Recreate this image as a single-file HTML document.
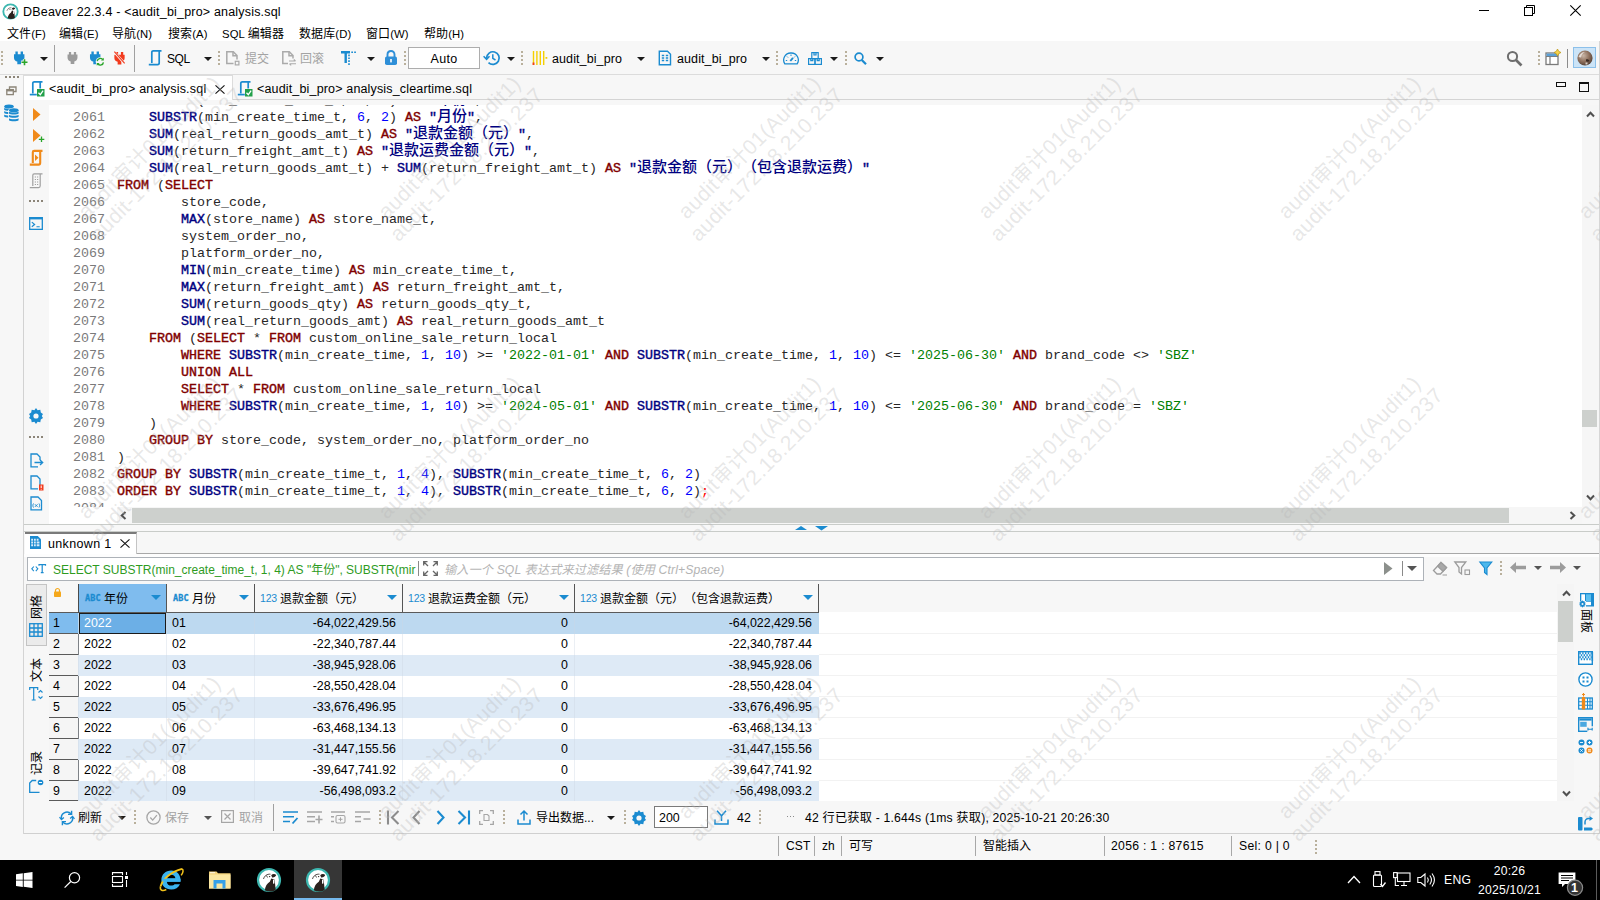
<!DOCTYPE html>
<html lang="zh"><head><meta charset="utf-8"><title>DBeaver</title>
<style>
*{box-sizing:border-box;margin:0;padding:0}
html,body{width:1600px;height:900px;overflow:hidden;background:#fff}
body{position:relative;text-spacing-trim:space-all;font-family:"Liberation Sans","Noto Sans CJK SC",sans-serif;font-size:12px;color:#000}
.abs{position:absolute}
.t{position:absolute;white-space:nowrap;line-height:16px;height:16px}
svg{position:absolute;overflow:visible}
/* title */
#title{position:absolute;left:0;top:0;width:1600px;height:22px;background:#fff}
#menu{position:absolute;left:0;top:22px;width:1600px;height:19px;background:#fff}
#menu .t{top:3.5px;font-size:12px;letter-spacing:.1px}
#toolbar{position:absolute;left:0;top:41px;width:1600px;height:33px;background:#f7f7f7}
.grip{position:absolute;width:2px;height:16px;background:repeating-linear-gradient(#b9b09c 0 2px,transparent 2px 4px)}
.vsep{position:absolute;width:1px;background:#a0a0a0}
.dd{position:absolute;width:0;height:0;border-left:4px solid transparent;border-right:4px solid transparent;border-top:4px solid #1a1a1a}
#tabs{position:absolute;left:0;top:74px;width:1600px;height:27px;background:#f7f7f7;border-top:1px solid #dcdcdc}
#leftbar{position:absolute;left:0;top:101px;width:23px;height:758px;background:#f7f7f7}
/* editor */
#edwrap{position:absolute;left:24px;top:100px;width:1575px;height:425px;background:#f7f7f7;overflow:hidden}
#ruler{position:absolute;left:0;top:0;width:25px;height:425px;background:#f7f7f7}
#codeview{position:absolute;left:25px;top:5px;width:1533px;height:402px;background:#fff;overflow:hidden}
#code{position:absolute;left:0;top:-13px;font-family:"Liberation Mono","Noto Sans CJK SC",monospace;font-size:13.333px;line-height:17px;color:#262626;text-spacing-trim:space-all}
.ln{height:17px;white-space:pre;overflow:visible}
.no{display:inline-block;width:56px;text-align:right;color:#7a7a7a;margin-right:12px}
.k{color:#800000;font-weight:normal;-webkit-text-stroke:.4px #800000}
.f{color:#000080;font-weight:normal;-webkit-text-stroke:.4px #000080}
.q{color:#000080;font-weight:normal;-webkit-text-stroke:.4px #000080}
.cj{font-family:"Noto Sans CJK SC",sans-serif;font-size:15px;font-weight:500;line-height:0;-webkit-text-stroke:0}
.s{color:#008000}
.n{color:#0000ff}
.e{color:#ff0000}
/* watermark */
#wmlayer{position:absolute;left:0;top:0;width:1600px;height:860px;overflow:hidden;pointer-events:none}
.wm{position:absolute;width:300px;height:48px;transform:rotate(-45deg);transform-origin:50% 50%;color:rgba(182,182,182,.33);font-size:21px;letter-spacing:.4px;line-height:24px;text-align:center;white-space:nowrap;font-family:"Liberation Sans","Noto Sans CJK SC",sans-serif}
/* taskbar */
#taskbar{position:absolute;left:0;top:860px;width:1600px;height:40px;background:#000}
/* results */
#sash{position:absolute;left:24px;top:524px;width:1576px;height:8px;background:#f8f8f8;border-top:1px solid #c9ccc9;border-bottom:1px solid #c9ccc9}
#results{position:absolute;left:0;top:532px;width:1600px;height:302px;background:#f7f7f7;overflow:hidden}
#results .hl{position:absolute;height:1px;background:#c4c4c4}
.gh{position:absolute;top:52px;height:28px;background:#f7f7f7}
.gh .ht{position:absolute;top:7px;font-size:12px;line-height:16px;white-space:nowrap}
.gh .ic{position:absolute;top:8px;font-size:10.500px;line-height:12px;color:#1b8bd0;letter-spacing:-.2px}
.gh .abc{position:absolute;top:10px;font-size:8.500px;line-height:9px;color:#1b8bd0;font-weight:bold;letter-spacing:.1px;font-family:"DejaVu Sans Mono","Liberation Mono",monospace;-webkit-text-stroke:.3px #1b8bd0}
.gh .tri{position:absolute;top:11px;width:0;height:0;border-left:5px solid transparent;border-right:5px solid transparent;border-top:5px solid #1b8bd0}
.csep{position:absolute;top:52px;width:1px;height:28px;background:#555}
.row{position:absolute;left:78px;width:741px;height:21px}
.row.od{background:#deeaf6}
.row.sel{background:#bdd9f0}
.c{position:absolute;top:0;height:21px;line-height:20px;font-size:12.4px;white-space:nowrap;padding:0 6px;border-left:1px solid rgba(205,216,228,.4)}
.c.r{text-align:right}
.c.l{padding-left:5px}
.rh{position:absolute;left:49px;width:29px;height:21px;border-top:1px solid #5a5a5a;font-size:12.4px;line-height:20px;padding-left:4px;background:#f5f5f5}
.vt{position:absolute;font-size:12px;line-height:14px;white-space:nowrap;transform-origin:0 0;transform:rotate(-90deg)}
#status{position:absolute;left:0;top:834px;width:1600px;height:26px;background:#f7f7f7}
.la{font-size:11.300px}

</style></head>
<body>
<div id="title">
  <svg style="left:1.500px;top:2.500px" width="17" height="17" viewBox="0 0 26 26"><circle cx="13" cy="13" r="11" fill="#fff" stroke="#3db7b0" stroke-width="2.800"/><path d="M8.800 23.300c.4-4.300 2.400-6.800 5-8.600l1.500-3.200 3.200 1 .6 4.500.6 6c-3.500 2-7.600 2-10.900.3z" fill="#2a211d"/><path d="M15.200 8.200c1.400-1.500 3.800-1.600 5-.1-.5 1.500-2.400 2.600-4 2.300z" fill="#2a211d"/><path d="M17 12.800v4l1.400-.4v-4z" fill="#fff"/><path d="M7.500 12c.8-3 3.500-5.200 7-4.800M10.500 8.500l1 2" stroke="#2a211d" fill="none" stroke-width=".8"/><circle cx="13.600" cy="9.600" r=".7" fill="#2a211d"/></svg>
  <div class="t" style="left:23px;top:4px;font-size:12.5px;letter-spacing:.19px">DBeaver 22.3.4 - &lt;audit_bi_pro&gt; analysis.sql</div>
  <div class="abs" style="left:1479px;top:10px;width:10px;height:1px;background:#000"></div>
  <svg style="left:1524px;top:5px" width="11" height="11" viewBox="0 0 11 11" fill="none" stroke="#000" stroke-width="1"><rect x=".5" y="2.500" width="8" height="8"/><path d="M2.500 2.500v-2h8v8h-2"/></svg>
  <svg style="left:1570px;top:5px" width="11" height="11" viewBox="0 0 11 11" stroke="#000" stroke-width="1.100"><path d="M.3.300l10.400 10.400M10.700.300L.3 10.700"/></svg>
</div>
<div id="menu">
  <div class="t" style="left:7px">文件<span class="la">(F)</span></div>
  <div class="t" style="left:59px">编辑<span class="la">(E)</span></div>
  <div class="t" style="left:112px">导航<span class="la">(N)</span></div>
  <div class="t" style="left:168px">搜索<span class="la">(A)</span></div>
  <div class="t" style="left:222px"><span class="la">SQL </span>编辑器</div>
  <div class="t" style="left:299px">数据库<span class="la">(D)</span></div>
  <div class="t" style="left:366px">窗口<span class="la">(W)</span></div>
  <div class="t" style="left:424px">帮助<span class="la">(H)</span></div>
</div>
<div id="toolbar">
<div class="grip" style="left:1px;top:10px"></div>
<svg style="left:13px;top:9px" width="16" height="16" viewBox="0 0 16 16"><path d="M2 1h2.500v3h3V1H10v3h1.500v3.500c0 2.200-1.500 3.700-3.500 4v3H4v-3C2 11.200.5 9.700.5 7.500V4H2z" fill="#1b8bd0" transform="translate(.5 .5) scale(.95)"/><path d="M11.500 9v6.500M8.200 12.200h6.600" stroke="#f7f7f7" stroke-width="3.200" fill="none"/><path d="M11.500 9.200v6M8.500 12.200h6" stroke="#2aa52a" stroke-width="1.600" fill="none"/></svg>
<div class="dd" style="left:40px;top:16px"></div>
<div class="vsep" style="left:54px;top:4px;height:27px"></div>
<svg style="left:67px;top:10px" width="11" height="14" viewBox="0 0 12 15.5"><path d="M2 1h2.500v3h3V1H10v3h1.500v3.500c0 2.200-1.500 3.700-3.500 4v3H4v-3C2 11.200.5 9.700.5 7.500V4H2z" fill="#9b9b9b"/></svg>
<svg style="left:89px;top:9px" width="16" height="16" viewBox="0 0 16 16"><path d="M2 1h2.500v3h3V1H10v3h1.500v3.500c0 2.200-1.500 3.700-3.500 4v3H4v-3C2 11.200.5 9.700.5 7.500V4H2z" fill="#1b8bd0" transform="translate(.5 .5) scale(.95)"/><circle cx="11.300" cy="11.800" r="4.600" fill="#f7f7f7"/><path d="M8.200 11.200a3.200 3.200 0 0 1 5.500-1.800M14.400 12.300a3.200 3.200 0 0 1-5.500 1.800" stroke="#2aa52a" stroke-width="1.400" fill="none"/><path d="M14.800 7.700v2.800h-2.800zM7.800 15.800v-2.800h2.800z" fill="#2aa52a"/></svg>
<svg style="left:113px;top:10px" width="13" height="14" viewBox="0 0 13 15"><path d="M2 1h2.500v3h3V1H10v3h1.500v3.500c0 2.200-1.500 3.700-3.500 4v3H4v-3C2 11.200.5 9.700.5 7.500V4H2z" fill="#f23a1d" transform="translate(.5 0)"/><path d="M.8.800l11 12.500" stroke="#f7f7f7" stroke-width="2.600"/><path d="M1 .6l11 12.600" stroke="#f23a1d" stroke-width="1.200"/></svg>
<div class="vsep" style="left:134px;top:4px;height:27px"></div>
<svg style="left:148px;top:9px" width="15" height="16" viewBox="0 0 15 16" fill="none" stroke="#1b8bd0" stroke-width="1.700"><path d="M3.800 13V2.200c0-.9.700-1.300 1.400-1.300h8.300M11.200 1.500v11.300c0 1-.6 1.800-1.600 1.800H.8"/></svg>
<div class="t" style="left:167px;top:10px;font-size:12px;letter-spacing:-.4px">SQL</div>
<div class="dd" style="left:204px;top:16px"></div>
<div class="grip" style="left:218px;top:10px"></div>
<svg style="left:225px;top:9px" width="16" height="16" viewBox="0 0 16 16" fill="none" stroke="#aaa" stroke-width="1.500"><path d="M8.500 13.500H1.800V1.800h6.500l3.700 3.700v4"/><path d="M8 1.800v4h4"/><rect x="10.300" y="11.300" width="3.600" height="3.600" stroke-width="1.200"/></svg>
<div class="t" style="left:245px;top:10px;color:#a3a3a3">提交</div>
<svg style="left:281px;top:9px" width="16" height="16" viewBox="0 0 16 16" fill="none" stroke="#aaa" stroke-width="1.500"><path d="M7 13.500H1.800V1.800h6.500l3.700 3.700v3"/><path d="M8 1.800v4h4"/><path d="M8 11h6.500M12.800 9.500L14.500 11M8.500 13.800H15M10.200 15.300L8.500 13.800" stroke-width="1.100"/></svg>
<div class="t" style="left:300px;top:10px;color:#a3a3a3">回滚</div>
<svg style="left:341px;top:9px" width="16" height="16" viewBox="0 0 16 16"><path d="M0 1h9v2.400H5.900V13H3.500V3.400H0z" fill="#1b8bd0"/><path d="M10.300 2.200h5.200" stroke="#1b8bd0" stroke-width="1.600" stroke-dasharray="1.700 1.200"/><path d="M8 4.500v10.500" stroke="#1b8bd0" stroke-width="1.600" stroke-dasharray="1.700 1.200"/></svg>
<div class="dd" style="left:367px;top:16px"></div>
<svg style="left:384px;top:9px" width="14" height="16" viewBox="0 0 14 16"><path d="M3.500 7V4.600C3.500 2.500 5 1 7 1s3.500 1.500 3.500 3.600V7" fill="none" stroke="#2e8fd8" stroke-width="1.900"/><rect x="1" y="6.500" width="12" height="8.500" rx="1.800" fill="#2e8fd8"/><rect x="6.200" y="9" width="1.600" height="3.400" fill="#fff"/></svg>
<div class="grip" style="left:404px;top:10px"></div>
<div class="abs" style="left:408px;top:6px;width:72px;height:22px;background:#fff;border:1px solid #adadad"></div>
<div class="t" style="left:408px;top:10px;width:72px;text-align:center;font-size:12.500px;letter-spacing:.3px">Auto</div>
<svg style="left:483px;top:9px" width="17" height="16" viewBox="0 0 17 16" fill="none" stroke="#1b8bd0" stroke-width="1.700"><path d="M3.600 8a6.300 6.300 0 1 1 1.900 4.600"/><path d="M.6 6.200L3.600 9.300 6.500 6.200" stroke-width="1.500"/><path d="M9.800 4.300v4l2.700 1.700" stroke-width="1.500"/></svg>
<div class="dd" style="left:507px;top:16px"></div>
<div class="grip" style="left:521px;top:10px"></div>
<svg style="left:532px;top:9px" width="16" height="16" viewBox="0 0 16 16"><path d="M1.500 1v14M4.900 1v14M8.300 1v14M11.700 1v14" stroke="#f5d000" stroke-width="1.400"/><rect x=".6" y="12.500" width="1.800" height="2.500" fill="#f23a1d"/><rect x="13.500" y="7" width="1.800" height="1.800" fill="#f5d000"/></svg>
<div class="t" style="left:552px;top:10px;font-size:12.500px;letter-spacing:.1px">audit_bi_pro</div>
<div class="dd" style="left:637px;top:16px"></div>
<svg style="left:658px;top:9px" width="14" height="16" viewBox="0 0 14 16" fill="none" stroke="#1b8bd0"><path d="M1.300 1.200h8.200l3 3v10.600H1.300z" stroke-width="1.400"/><path d="M3.800 5.500h2.400M3.800 8h2.400M3.800 10.500h2.400M7.800 5.500h2.400M7.800 8h2.400M7.800 10.500h2.400" stroke-width="1.400"/></svg>
<div class="t" style="left:677px;top:10px;font-size:12.500px;letter-spacing:.1px">audit_bi_pro</div>
<div class="dd" style="left:762px;top:16px"></div>
<div class="grip" style="left:776px;top:10px"></div>
<svg style="left:783px;top:11px" width="16" height="13" viewBox="0 0 16 13" fill="none" stroke="#1b8bd0" stroke-width="1.300"><path d="M1.800 11.800A7 7 0 0 1 8 1a7 7 0 0 1 6.200 10.800z"/><path d="M7.300 9l2.700-3.200" stroke-width="1.900"/><path d="M2.800 8.500h1.400M11.800 8.500h1.400M8 2.500v1.500M4 4.500l1 1M12 4.500l-1 1" stroke-width="1"/></svg>
<svg style="left:808px;top:11px" width="14" height="13" viewBox="0 0 14 13" fill="none" stroke="#1b8bd0" stroke-width="1.200"><rect x="3.800" y=".6" width="6.400" height="6"/><path d="M6 .6v2.400h2V.6"/><rect x=".6" y="6.600" width="6.400" height="5.800"/><rect x="7" y="6.600" width="6.400" height="5.800"/><path d="M2.800 6.600v2h2v-2M9.200 6.600v2h2v-2"/></svg>
<div class="dd" style="left:830px;top:16px"></div>
<div class="grip" style="left:845px;top:10px"></div>
<svg style="left:854px;top:11px" width="13" height="13" viewBox="0 0 13 13" fill="none" stroke="#1b8bd0"><circle cx="5" cy="5" r="3.900" stroke-width="1.700"/><path d="M7.800 8l4.200 4.200" stroke-width="2.200"/></svg>
<div class="dd" style="left:876px;top:16px"></div>
<svg style="left:1506px;top:9px" width="17" height="17" viewBox="0 0 17 17" fill="none" stroke="#6e6e6e"><circle cx="6.500" cy="6.500" r="4.600" stroke-width="2"/><path d="M10 10l5.500 5.500" stroke-width="2.600"/></svg>
<div class="grip" style="left:1538px;top:10px"></div>
<svg style="left:1545px;top:8px" width="16" height="17" viewBox="0 0 16 17" fill="none"><rect x="1" y="4" width="12" height="11.500" stroke="#7a7a7a" stroke-width="1.300" fill="#fff"/><path d="M1 7.500h12M5 7.500v8" stroke="#7a7a7a" stroke-width="1.200"/><rect x="1.600" y="4.600" width="10.800" height="2.500" fill="#5aa0d8"/><path d="M12.500 0l1.200 2.300 2.300 1.200-2.300 1.200-1.200 2.300-1.200-2.300L9 3.500l2.300-1.200z" fill="#f7d24a" stroke="#b89412" stroke-width=".7"/></svg>
<div class="vsep" style="left:1567px;top:8px;height:19px;background:#8c8c8c"></div>
<div class="abs" style="left:1573px;top:6px;width:23px;height:21px;background:#cce4f7;border:1px solid #8cc0ea"></div>
<svg style="left:1577px;top:9px" width="16" height="16" viewBox="0 0 16 16"><defs><radialGradient id="bv" cx=".4" cy=".35" r=".7"><stop offset="0" stop-color="#c9b5a5"/><stop offset=".55" stop-color="#8d6f5c"/><stop offset="1" stop-color="#4f3d33"/></radialGradient></defs><circle cx="8" cy="8" r="7.600" fill="url(#bv)"/><path d="M1.500 7c1-3 3.500-5 6.500-5-2 1-3.500 2.500-4 5.500z" fill="#efe9e4" opacity=".85"/><path d="M9 9.500c1.500-.5 3 0 3.500 1.500-1 1-2.500 1-3.500.3z" fill="#3a2c25"/><path d="M8.500 12.500h2v2h-2z" fill="#f3efe9" opacity=".8"/></svg>

</div>
<div id="tabs">
<div class="abs" style="left:5px;top:1px;width:14px;height:2px;background:repeating-linear-gradient(90deg,#8c8578 0 2px,transparent 2px 4px)"></div>
<svg style="left:6px;top:11px" width="11" height="10" viewBox="0 0 11 10" fill="none" stroke="#8c8578" stroke-width="1.300"><path d="M3.500 3V1h6.500v4.500H8"/><rect x=".8" y="3.600" width="6.500" height="5"/><path d="M.8 4.600h6.500" stroke-width="1.600"/></svg>
<div class="abs" style="left:23px;top:0;width:210px;height:27px;background:#fff;border:1px solid #dcdcdc;border-bottom:none"></div>
<svg style="left:29px;top:6px" width="16" height="16" viewBox="0 0 16 16" fill="none"><path d="M3.800 12.500V2.200c0-.9.700-1.300 1.400-1.300h8.300M11.200 1.500v6" stroke="#1b8bd0" stroke-width="1.700"/><path d="M.8 13.600h7" stroke="#1b8bd0" stroke-width="1.700"/><rect x="8" y="8" width="7.500" height="7.500" fill="#22a04a"/><path d="M9.500 11.800l1.800 1.900 2.800-4" stroke="#fff" stroke-width="1.300"/></svg>
<div class="t" style="left:49px;top:6px;font-size:12.500px;letter-spacing:.22px">&lt;audit_bi_pro&gt; analysis.sql</div>
<svg style="left:215px;top:10px" width="10" height="9" viewBox="0 0 10 9" stroke="#111" stroke-width="1.100"><path d="M.5.300l9 8.400M9.500.300l-9 8.400"/></svg>
<svg style="left:237px;top:6px" width="16" height="16" viewBox="0 0 16 16" fill="none"><path d="M3.800 12.500V2.200c0-.9.700-1.300 1.400-1.300h8.300M11.200 1.500v6" stroke="#1b8bd0" stroke-width="1.700"/><path d="M.8 13.600h7" stroke="#1b8bd0" stroke-width="1.700"/><rect x="8" y="8" width="7.500" height="7.500" fill="#22a04a"/><path d="M9.500 11.800l1.800 1.900 2.800-4" stroke="#fff" stroke-width="1.300"/></svg>
<div class="t" style="left:257px;top:6px;font-size:12.500px;letter-spacing:.16px">&lt;audit_bi_pro&gt; analysis_cleartime.sql</div>
<div class="abs" style="left:1556px;top:7px;width:10px;height:5px;border:1px solid #111;border-top-width:1.500px"></div>
<div class="abs" style="left:1579px;top:7px;width:10px;height:10px;border:1px solid #111;border-top-width:2px"></div>
<div class="abs tabline" style="left:233px;top:24px;width:1367px;height:1px;background:#d4d4d4"></div>

</div>
<div id="leftbar">
<svg style="left:3px;top:3px" width="16" height="17" viewBox="0 0 16 17"><ellipse cx="6" cy="2.5" rx="4.800" ry="2" fill="#1b8bd0"/><path d="M1.2000000000000002 3.7c1 1.300 8.600 1.300 9.600 0v2c-1 1.300-8.600 1.300-9.600 0z" fill="#1b8bd0"/><path d="M1.2000000000000002 7.1c1 1.300 8.600 1.300 9.600 0v2c-1 1.300-8.600 1.300-9.600 0z" fill="#1b8bd0"/><path d="M1.2000000000000002 10.5c1 1.300 8.600 1.300 9.600 0v2c-1 1.300-8.600 1.300-9.600 0z" fill="#1b8bd0"/><ellipse cx="10.800" cy="6.500" rx="5.600" ry="2.800" fill="#f7f7f7"/><rect x="5.200" y="6.500" width="11" height="10" fill="#f7f7f7"/><ellipse cx="10.8" cy="6.2" rx="4.800" ry="2" fill="#1b8bd0"/><path d="M6.000000000000001 7.4c1 1.300 8.600 1.300 9.600 0v2c-1 1.300-8.600 1.300-9.600 0z" fill="#1b8bd0"/><path d="M6.000000000000001 10.8c1 1.300 8.600 1.300 9.600 0v2c-1 1.300-8.600 1.300-9.600 0z" fill="#1b8bd0"/><path d="M6.000000000000001 14.2c1 1.300 8.600 1.300 9.600 0v2c-1 1.300-8.600 1.300-9.600 0z" fill="#1b8bd0"/></svg>

</div>

<div id="edwrap">
  <div id="ruler">
<svg style="left:9px;top:8px" width="8" height="13" viewBox="0 0 8 13"><path d="M0 0l7.500 6.500L0 13z" fill="#f08a1a"/></svg>
<svg style="left:9px;top:29px" width="12" height="15" viewBox="0 0 12 15"><path d="M0 0l7.500 6.500L0 13z" fill="#f08a1a"/><path d="M8.500 7.500v5.500M5.800 10.300h5.500" stroke="#2aa52a" stroke-width="1.300"/></svg>
<svg style="left:5px;top:50px" width="15" height="17" viewBox="0 0 15 17" fill="none" stroke="#f08a1a" stroke-width="2.100"><path d="M3.800 13V2.200c0-.9.700-1.300 1.400-1.300h8.300M11.200 1.500v11.300c0 1-.6 1.800-1.600 1.800H.8"/><path d="M6 4.500l3.500 3.200L6 11z" fill="#f08a1a" stroke="none"/></svg>
<svg style="left:5px;top:73px" width="15" height="17" viewBox="0 0 15 17" fill="none" stroke="#a0a0a0" stroke-width="1.200"><path d="M3.800 13V2.200c0-.9.700-1.300 1.400-1.300h8.300M11.200 1.500v11.300c0 1-.6 1.800-1.600 1.800H.8"/><path d="M5.800 4h3.600M5.800 6.500h3.600M5.800 9h3.600M5.800 11.500h3.600" stroke-dasharray="1.200 1"/></svg>
<div class="abs" style="left:5px;top:100px;width:14px;height:2px;background:repeating-linear-gradient(90deg,#8c8578 0 2px,transparent 2px 4px)"></div>
<svg style="left:5px;top:117px" width="14" height="13" viewBox="0 0 15 14" fill="none" stroke="#1b8bd0"><rect x=".7" y=".7" width="13.600" height="12.600" stroke-width="1.400"/><path d="M.7 1.500h13.600" stroke-width="2.200"/><path d="M3 5.500l3 2.500-3 2.500M8 10.500h3.500" stroke-width="1.300"/></svg>
<svg style="left:4px;top:308px" width="16" height="16" viewBox="0 0 16 16"><path d="M8 0l1.600 2.200 2.700-.5.500 2.700L15 6l-1.200 2L15 10l-2.200 1.600-.5 2.700-2.700-.5L8 16l-1.600-2.200-2.700.5-.5-2.700L1 10l1.200-2L1 6l2.200-1.600.5-2.700 2.700.5z" fill="#1b8bd0"/><circle cx="8" cy="8" r="2.600" fill="#f7f7f7"/></svg>
<div class="abs" style="left:5px;top:336px;width:14px;height:2px;background:repeating-linear-gradient(90deg,#8c8578 0 2px,transparent 2px 4px)"></div>
<svg style="left:6px;top:353px" width="14" height="15" viewBox="0 0 14 15" fill="none" stroke="#1b8bd0" stroke-width="1.300"><path d="M8 13.800H1V1h6l3 3v3"/><path d="M4.500 9.500h8M10 7l2.700 2.500L10 12"/></svg>
<svg style="left:6px;top:375px" width="14" height="16" viewBox="0 0 14 16" fill="none"><path d="M8 13.800H1V1h6l3 3v6" stroke="#1b8bd0" stroke-width="1.300"/><rect x="9" y="9.500" width="4.500" height="6" fill="#f23a1d"/><path d="M11.200 10.500v2.500M11.200 13.800v.8" stroke="#fff" stroke-width="1"/></svg>
<svg style="left:6px;top:396px" width="13" height="15" viewBox="0 0 13 15" fill="none" stroke="#1b8bd0" stroke-width="1.300"><path d="M1 13.800V1h7l3.500 3.500v9.300z"/><path d="M3.500 7.500c-.8 1.200-.8 2.800 0 4M9 7.500c.8 1.200.8 2.800 0 4M5 8.300l2.500 2.500M7.500 8.300L5 10.800" stroke-width="1"/></svg>

  </div>
  <div id="codeview"><div id="code">
<div class="ln"><span class="no">2060</span><span class="tx">    <b class="f">SUBSTR</b>(min_create_time_t, <span class="n">1</span>, <span class="n">4</span>) <b class="k">AS</b> <b class="q">&quot;<span class="cj">年份</span>&quot;</b>,</span></div>
<div class="ln"><span class="no">2061</span><span class="tx">    <b class="f">SUBSTR</b>(min_create_time_t, <span class="n">6</span>, <span class="n">2</span>) <b class="k">AS</b> <b class="q">&quot;<span class="cj">月份</span>&quot;</b>,</span></div>
<div class="ln"><span class="no">2062</span><span class="tx">    <b class="f">SUM</b>(real_return_goods_amt_t) <b class="k">AS</b> <b class="q">&quot;<span class="cj">退款金额（元）</span>&quot;</b>,</span></div>
<div class="ln"><span class="no">2063</span><span class="tx">    <b class="f">SUM</b>(return_freight_amt_t) <b class="k">AS</b> <b class="q">&quot;<span class="cj">退款运费金额（元）</span>&quot;</b>,</span></div>
<div class="ln"><span class="no">2064</span><span class="tx">    <b class="f">SUM</b>(real_return_goods_amt_t) + <b class="f">SUM</b>(return_freight_amt_t) <b class="k">AS</b> <b class="q">&quot;<span class="cj">退款金额（元）（包含退款运费）</span>&quot;</b></span></div>
<div class="ln"><span class="no">2065</span><span class="tx"><b class="k">FROM</b> (<b class="k">SELECT</b></span></div>
<div class="ln"><span class="no">2066</span><span class="tx">        store_code,</span></div>
<div class="ln"><span class="no">2067</span><span class="tx">        <b class="f">MAX</b>(store_name) <b class="k">AS</b> store_name_t,</span></div>
<div class="ln"><span class="no">2068</span><span class="tx">        system_order_no,</span></div>
<div class="ln"><span class="no">2069</span><span class="tx">        platform_order_no,</span></div>
<div class="ln"><span class="no">2070</span><span class="tx">        <b class="f">MIN</b>(min_create_time) <b class="k">AS</b> min_create_time_t,</span></div>
<div class="ln"><span class="no">2071</span><span class="tx">        <b class="f">MAX</b>(return_freight_amt) <b class="k">AS</b> return_freight_amt_t,</span></div>
<div class="ln"><span class="no">2072</span><span class="tx">        <b class="f">SUM</b>(return_goods_qty) <b class="k">AS</b> return_goods_qty_t,</span></div>
<div class="ln"><span class="no">2073</span><span class="tx">        <b class="f">SUM</b>(real_return_goods_amt) <b class="k">AS</b> real_return_goods_amt_t</span></div>
<div class="ln"><span class="no">2074</span><span class="tx">    <b class="k">FROM</b> (<b class="k">SELECT</b> * <b class="k">FROM</b> custom_online_sale_return_local</span></div>
<div class="ln"><span class="no">2075</span><span class="tx">        <b class="k">WHERE</b> <b class="f">SUBSTR</b>(min_create_time, <span class="n">1</span>, <span class="n">10</span>) &gt;= <span class="s">&#x27;2022-01-01&#x27;</span> <b class="k">AND</b> <b class="f">SUBSTR</b>(min_create_time, <span class="n">1</span>, <span class="n">10</span>) &lt;= <span class="s">&#x27;2025-06-30&#x27;</span> <b class="k">AND</b> brand_code &lt;&gt; <span class="s">&#x27;SBZ&#x27;</span></span></div>
<div class="ln"><span class="no">2076</span><span class="tx">        <b class="k">UNION</b> <b class="k">ALL</b></span></div>
<div class="ln"><span class="no">2077</span><span class="tx">        <b class="k">SELECT</b> * <b class="k">FROM</b> custom_online_sale_return_local</span></div>
<div class="ln"><span class="no">2078</span><span class="tx">        <b class="k">WHERE</b> <b class="f">SUBSTR</b>(min_create_time, <span class="n">1</span>, <span class="n">10</span>) &gt;= <span class="s">&#x27;2024-05-01&#x27;</span> <b class="k">AND</b> <b class="f">SUBSTR</b>(min_create_time, <span class="n">1</span>, <span class="n">10</span>) &lt;= <span class="s">&#x27;2025-06-30&#x27;</span> <b class="k">AND</b> brand_code = <span class="s">&#x27;SBZ&#x27;</span></span></div>
<div class="ln"><span class="no">2079</span><span class="tx">    )</span></div>
<div class="ln"><span class="no">2080</span><span class="tx">    <b class="k">GROUP</b> <b class="k">BY</b> store_code, system_order_no, platform_order_no</span></div>
<div class="ln"><span class="no">2081</span><span class="tx">)</span></div>
<div class="ln"><span class="no">2082</span><span class="tx"><b class="k">GROUP</b> <b class="k">BY</b> <b class="f">SUBSTR</b>(min_create_time_t, <span class="n">1</span>, <span class="n">4</span>), <b class="f">SUBSTR</b>(min_create_time_t, <span class="n">6</span>, <span class="n">2</span>)</span></div>
<div class="ln"><span class="no">2083</span><span class="tx"><b class="k">ORDER</b> <b class="k">BY</b> <b class="f">SUBSTR</b>(min_create_time_t, <span class="n">1</span>, <span class="n">4</span>), <b class="f">SUBSTR</b>(min_create_time_t, <span class="n">6</span>, <span class="n">2</span>)<span class="e">;</span></span></div>
<div class="ln"><span class="no">2084</span><span class="tx"></span></div>
  </div></div>
<!-- vertical scrollbar -->
<div class="abs" style="left:1558px;top:5px;width:17px;height:402px;background:#f6f6f6"></div>
<svg style="left:1561.500px;top:11px" width="9" height="6" viewBox="0 0 9 6" fill="none" stroke="#505050" stroke-width="2"><path d="M1 5.500l3.500-3.800 3.500 3.800"/></svg>
<div class="abs" style="left:1558px;top:310px;width:15px;height:17px;background:#cdd0cd"></div>
<svg style="left:1561.500px;top:395px" width="9" height="6" viewBox="0 0 9 6" fill="none" stroke="#505050" stroke-width="2"><path d="M1 .5l3.500 3.800L8 .5"/></svg>
<!-- horizontal scrollbar -->
<div class="abs" style="left:93px;top:407px;width:1465px;height:17px;background:#f6f6f6"></div>
<svg style="left:96px;top:411px" width="6" height="9" viewBox="0 0 6 9" fill="none" stroke="#505050" stroke-width="2"><path d="M5.500 1L1.700 4.500 5.500 8"/></svg>
<div class="abs" style="left:108px;top:408px;width:1377px;height:15px;background:#cdd0cd"></div>
<svg style="left:1546px;top:411px" width="6" height="9" viewBox="0 0 6 9" fill="none" stroke="#505050" stroke-width="2"><path d="M.5 1l3.800 3.500L.5 8"/></svg>
<div class="abs" style="left:25px;top:407px;width:68px;height:17px;background:#fff"></div>

</div>

<div id="sash"><svg style="left:770.500px;top:.5px" width="12" height="4" viewBox="0 0 12 4"><path d="M0 4L6 0l6 4z" fill="#1b8bd0"/></svg><svg style="left:791px;top:.5px" width="13" height="5" viewBox="0 0 13 5"><path d="M0 0h13L6.500 4.500z" fill="#1b8bd0"/></svg></div>
<div id="results">
<!-- result tab -->
<div class="abs resleft" style="left:23px;top:0;width:1px;height:302px;background:#d4d4d4"></div>
<div class="abs" style="left:25px;top:0;width:112px;height:22px;background:#fff;border-top:2px solid #7a7a7a;border-right:1px solid #c4c4c4"></div>
<svg style="left:30px;top:4px" width="11" height="13" viewBox="0 0 12 14"><path d="M0 0h8.500L12 3.500V14H0z" fill="#1b8bd0"/><path d="M1.300 3h2v2h-2zM4.300 3h2v2h-2zM7.300 3h2v2h-2zM1.300 6h2v2h-2zM4.300 6h2v2h-2zM7.300 6h3v2h-3zM1.300 9h2v2h-2zM4.300 9h2v2h-2zM7.300 9h3v2h-3z" fill="#d9ecfa"/></svg>
<div class="t" style="left:48px;top:4px;font-size:12.500px;letter-spacing:.35px">unknown 1</div>
<svg style="left:120px;top:7px" width="10" height="9" viewBox="0 0 10 9" stroke="#111" stroke-width="1.100"><path d="M.5.300l9 8.400M9.500.300l-9 8.400"/></svg>
<div class="hl" style="left:137px;top:21px;width:1463px;background:#a8a8a8"></div>
<div class="abs whiteband" style="left:24px;top:22px;width:1575px;height:3px;background:#fdfdfd"></div>
<!-- filter row -->
<div class="abs" style="left:27px;top:25px;width:1397px;height:24px;background:#fff;border:1px solid #adb2b8"></div>
<svg style="left:31px;top:31px" width="15" height="11" viewBox="0 0 15 11" fill="none" stroke="#1b8bd0" stroke-width="1.100"><path d="M2.800 3.500L.8 5.800l2 2.300M4.800 3.500l2 2.300-2 2.300"/><path d="M8 2.800V1.600h6.500v1.200M11.200 1.600v8M9.800 9.700h2.800" stroke-width="1.200"/></svg>
<div class="t" style="left:53px;top:30px;font-size:12px;letter-spacing:0;color:#2e9b1e">SELECT SUBSTR(min_create_time_t, 1, 4) AS "年份", SUBSTR(mir</div>
<div class="abs" style="left:418px;top:29px;width:1px;height:15px;background:#8a8a8a"></div>
<svg style="left:423px;top:29px" width="15" height="15" viewBox="0 0 15 15" fill="none" stroke="#666" stroke-width="1.300"><path d="M.7 4.500V.7h3.800M.7.700l4.300 4.300M10.500.700h3.800v3.800M14.300.700L10 5M.7 10.500v3.800h3.800M.7 14.300L5 10M14.300 10.500v3.800h-3.800M14.300 14.300L10 10"/></svg>
<div class="t" style="left:444px;top:30px;font-size:12.200px;font-style:italic;color:#b4b4b4;letter-spacing:.1px">输入一个 SQL 表达式来过滤结果 (使用 Ctrl+Space)</div>
<svg style="left:1384px;top:30px" width="9" height="13" viewBox="0 0 9 13"><path d="M0 0l8.500 6.500L0 13z" fill="#8c908c"/></svg>
<div class="abs" style="left:1402px;top:29px;width:1px;height:15px;background:#8a8a8a"></div>
<div class="abs" style="left:1407px;top:34px;width:0;height:0;border-left:5px solid transparent;border-right:5px solid transparent;border-top:5px solid #555"></div>
<svg style="left:1432px;top:29px" width="16" height="15" viewBox="0 0 16 15" fill="none" stroke="#9c9c9c" stroke-width="1.300"><path d="M9 1.500l5.500 5-6 6.500H5L1.500 9.500z"/><path d="M9 1.500l5.500 5-3.500 3.800-5.300-5z" fill="#a8a8a8"/><path d="M10.500 14h4.500" stroke-width="1"/></svg>
<svg style="left:1454px;top:29px" width="17" height="15" viewBox="0 0 17 15" fill="none" stroke="#9c9c9c" stroke-width="1.300"><path d="M.8 1h11L7.500 6.500V13L5 11V6.500z"/><rect x="11" y="9" width="4.500" height="4.500" stroke-width="1.100"/></svg>
<svg style="left:1479px;top:29px" width="14" height="15" viewBox="0 0 14 15"><path d="M.8 1h12L8 7v6.500L5.500 11.500V7z" fill="#4db8ec" stroke="#1b8bd0" stroke-width="1.100"/></svg>
<div class="grip" style="left:1500px;top:29px;height:14px"></div>
<svg style="left:1510px;top:30px" width="16" height="11" viewBox="0 0 16 11"><path d="M0 5.500L6 0v3.700h10v3.600H6V11z" fill="#9c9c9c"/></svg>
<div class="abs" style="left:1534px;top:34px;width:0;height:0;border-left:4px solid transparent;border-right:4px solid transparent;border-top:4px solid #555"></div>
<svg style="left:1550px;top:30px" width="16" height="11" viewBox="0 0 16 11"><path d="M16 5.500L10 0v3.700H0v3.600h10V11z" fill="#9c9c9c"/></svg>
<div class="abs" style="left:1573px;top:34px;width:0;height:0;border-left:4px solid transparent;border-right:4px solid transparent;border-top:4px solid #555"></div>
<!-- vertical tabs -->
<div class="abs" style="left:26px;top:52px;width:21px;height:62px;background:#ebebeb;border:1px solid #c4c4c4"></div>
<div class="vt" style="left:30px;top:87px">网格</div>
<svg style="left:29px;top:91px" width="14" height="14" viewBox="0 0 14 14" fill="none" stroke="#1b8bd0" stroke-width="1.300"><rect x=".7" y=".7" width="12.600" height="12.600"/><path d="M.7 5h12.600M.7 9h12.600M5 .7v12.600M9 .7v12.600"/></svg>
<div class="vt" style="left:30px;top:150px">文本</div>
<svg style="left:29px;top:155px" width="14" height="15" viewBox="0 0 14 15" fill="none" stroke="#1b8bd0" stroke-width="1.200"><path d="M.7 3V.7h8V3M4.700.7v12M2.700 13h4"/><path d="M9.500 5.500l2-2 2 2M9.500 9.500l2 2 2-2" stroke-width="1.100"/></svg>
<div class="vt" style="left:30px;top:243px">记录</div>
<svg style="left:29px;top:247px" width="15" height="14" viewBox="0 0 15 14" fill="none" stroke="#1b8bd0" stroke-width="1.300"><path d="M10.500 13.300H.7V4l2.500-2.500h4"/><circle cx="11.500" cy="3.500" r="2.800" fill="#1b8bd0" stroke="none"/><path d="M10 3.500h3" stroke="#fff" stroke-width="1"/></svg>
<!-- grid -->
<div class="abs" style="left:49px;top:52px;width:1508px;height:28px;background:#f7f7f7"></div>
<div class="abs" style="left:49px;top:80px;width:1508px;height:189px;background:#fff"></div>
<div class="abs" style="left:49px;top:80px;width:770px;height:1px;background:#5a5a5a"></div>
<svg style="left:54px;top:56px" width="7" height="9" viewBox="0 0 7 9"><path d="M1.500 4V2.500a2 2 0 0 1 4 0V4" fill="none" stroke="#f5a81c" stroke-width="1.200"/><rect x="0" y="3.500" width="7" height="5.500" rx=".8" fill="#f5a81c"/></svg>
<div class="gh" style="left:79px;width:88px;background:#7fbcee"><span class="abc" style="left:6px">ABC</span><span class="ht" style="left:25px">年份</span><span class="tri" style="left:72px"></span></div>
<div class="gh" style="left:167px;width:87px"><span class="abc" style="left:6px">ABC</span><span class="ht" style="left:25px">月份</span><span class="tri" style="left:72px"></span></div>
<div class="gh" style="left:255px;width:147px"><span class="ic" style="left:5px">123</span><span class="ht" style="left:25px">退款金额（元）</span><span class="tri" style="left:132px"></span></div>
<div class="gh" style="left:403px;width:171px"><span class="ic" style="left:5px">123</span><span class="ht" style="left:25px">退款运费金额（元）</span><span class="tri" style="left:156px"></span></div>
<div class="gh" style="left:575px;width:243px"><span class="ic" style="left:5px">123</span><span class="ht" style="left:25px">退款金额（元）（包含退款运费）</span><span class="tri" style="left:228px"></span></div>
<div class="csep" style="left:78px;height:217px;background:#4a4a4a"></div>
<div class="csep" style="left:166px"></div>
<div class="csep" style="left:254px"></div>
<div class="csep" style="left:402px"></div>
<div class="csep" style="left:574px"></div>
<div class="csep" style="left:818px"></div>
<div class="row sel" style="top:81px"><div class="c l" style="left:0px;width:88px;background:#6cafe6;color:#fff;border:1px solid #1a1a1a;left:1px;width:87px;padding-left:4px;line-height:18px">2022</div><div class="c l" style="left:88px;width:88px">01</div><div class="c r" style="left:176px;width:148px">-64,022,429.56</div><div class="c r" style="left:324px;width:172px">0</div><div class="c r" style="left:496px;width:244px">-64,022,429.56</div></div>
<div class="rh" style="top:80px;background:#7fbcee;border-top-color:#5a5a5a">1</div>
<div class="row" style="top:102px"><div class="c l" style="left:0px;width:88px">2022</div><div class="c l" style="left:88px;width:88px">02</div><div class="c r" style="left:176px;width:148px">-22,340,787.44</div><div class="c r" style="left:324px;width:172px">0</div><div class="c r" style="left:496px;width:244px">-22,340,787.44</div></div>
<div class="rh" style="top:101px">2</div>
<div class="row od" style="top:123px"><div class="c l" style="left:0px;width:88px">2022</div><div class="c l" style="left:88px;width:88px">03</div><div class="c r" style="left:176px;width:148px">-38,945,928.06</div><div class="c r" style="left:324px;width:172px">0</div><div class="c r" style="left:496px;width:244px">-38,945,928.06</div></div>
<div class="rh" style="top:122px">3</div>
<div class="row" style="top:144px"><div class="c l" style="left:0px;width:88px">2022</div><div class="c l" style="left:88px;width:88px">04</div><div class="c r" style="left:176px;width:148px">-28,550,428.04</div><div class="c r" style="left:324px;width:172px">0</div><div class="c r" style="left:496px;width:244px">-28,550,428.04</div></div>
<div class="rh" style="top:143px">4</div>
<div class="row od" style="top:165px"><div class="c l" style="left:0px;width:88px">2022</div><div class="c l" style="left:88px;width:88px">05</div><div class="c r" style="left:176px;width:148px">-33,676,496.95</div><div class="c r" style="left:324px;width:172px">0</div><div class="c r" style="left:496px;width:244px">-33,676,496.95</div></div>
<div class="rh" style="top:164px">5</div>
<div class="row" style="top:186px"><div class="c l" style="left:0px;width:88px">2022</div><div class="c l" style="left:88px;width:88px">06</div><div class="c r" style="left:176px;width:148px">-63,468,134.13</div><div class="c r" style="left:324px;width:172px">0</div><div class="c r" style="left:496px;width:244px">-63,468,134.13</div></div>
<div class="rh" style="top:185px">6</div>
<div class="row od" style="top:207px"><div class="c l" style="left:0px;width:88px">2022</div><div class="c l" style="left:88px;width:88px">07</div><div class="c r" style="left:176px;width:148px">-31,447,155.56</div><div class="c r" style="left:324px;width:172px">0</div><div class="c r" style="left:496px;width:244px">-31,447,155.56</div></div>
<div class="rh" style="top:206px">7</div>
<div class="row" style="top:228px"><div class="c l" style="left:0px;width:88px">2022</div><div class="c l" style="left:88px;width:88px">08</div><div class="c r" style="left:176px;width:148px">-39,647,741.92</div><div class="c r" style="left:324px;width:172px">0</div><div class="c r" style="left:496px;width:244px">-39,647,741.92</div></div>
<div class="rh" style="top:227px">8</div>
<div class="row od" style="top:249px"><div class="c l" style="left:0px;width:88px">2022</div><div class="c l" style="left:88px;width:88px">09</div><div class="c r" style="left:176px;width:148px">-56,498,093.2</div><div class="c r" style="left:324px;width:172px">0</div><div class="c r" style="left:496px;width:244px">-56,498,093.2</div></div>
<div class="rh" style="top:248px">9</div>
<div class="abs" style="left:819px;top:101px;width:738px;height:1px;background:#f2f2f2"></div><div class="abs" style="left:819px;top:122px;width:738px;height:1px;background:#f2f2f2"></div><div class="abs" style="left:819px;top:143px;width:738px;height:1px;background:#f2f2f2"></div><div class="abs" style="left:819px;top:164px;width:738px;height:1px;background:#f2f2f2"></div><div class="abs" style="left:819px;top:185px;width:738px;height:1px;background:#f2f2f2"></div><div class="abs" style="left:819px;top:206px;width:738px;height:1px;background:#f2f2f2"></div><div class="abs" style="left:819px;top:227px;width:738px;height:1px;background:#f2f2f2"></div><div class="abs" style="left:819px;top:248px;width:738px;height:1px;background:#f2f2f2"></div><div class="abs" style="left:819px;top:269px;width:738px;height:1px;background:#f2f2f2"></div>
<div class="abs rhbottom" style="left:49px;top:268px;width:29px;height:1px;background:#5a5a5a"></div>
<!-- grid v scrollbar -->
<div class="abs" style="left:1557px;top:52px;width:17px;height:217px;background:#f5f5f5"></div>
<svg style="left:1561.500px;top:58px" width="9" height="6" viewBox="0 0 9 6" fill="none" stroke="#505050" stroke-width="2"><path d="M1 5.500l3.500-3.800 3.500 3.800"/></svg>
<div class="abs" style="left:1558px;top:69px;width:15px;height:41px;background:#cdd0cd"></div>
<svg style="left:1561.500px;top:259px" width="9" height="6" viewBox="0 0 9 6" fill="none" stroke="#505050" stroke-width="2"><path d="M1 .5l3.500 3.800L8 .5"/></svg>
<!-- side panel -->
<svg style="left:1579px;top:61px" width="16" height="16" viewBox="0 0 16 16"><rect x="1" y="0" width="14" height="13.500" fill="#1b8bd0"/><rect x="2.300" y="1.300" width="3.700" height="8" fill="#fff"/><rect x="7" y="1.300" width="5" height="7" fill="#5bc0f0"/><rect x="7" y="8.800" width="5" height="3.400" fill="#fff"/><rect x="0" y="8" width="7" height="8" fill="#f7f7f7"/><path d="M3.500 8.300l.8 1.200 1.400-.4.100 1.500 1.300.6-.8 1.300.8 1.200-1.300.6-.1 1.500-1.400-.4-.8 1.200-.8-1.200-1.400.4-.1-1.500-1.300-.6.800-1.200-.8-1.300 1.300-.6.100-1.500 1.400.4z" fill="#1b8bd0" transform="translate(.3 -.3) scale(.9)"/><circle cx="3.500" cy="11" r="1" fill="#f7f7f7"/></svg>
<div class="vt" style="left:1593px;top:77px;transform:rotate(90deg)">面板</div>
<svg style="left:1578px;top:119px" width="15" height="14" viewBox="0 0 15 14"><rect x=".7" y=".7" width="13.600" height="12.600" fill="#fff" stroke="#1b8bd0" stroke-width="1.400"/><path d="M1.400 2.200h12.200M2.800 4.200h12M1.400 6.200h12.200M2.800 8.200h12" stroke="#1b8bd0" stroke-width="2" stroke-dasharray="1.400 1.400"/><rect x="13.600" y="1" width="1.500" height="9" fill="#1b8bd0"/></svg>
<svg style="left:1578px;top:140px" width="15" height="15" viewBox="0 0 15 15"><circle cx="7.500" cy="7.500" r="6.600" fill="#fff" stroke="#1b8bd0" stroke-width="1.400"/><path d="M4.500 4.500h2v2h-2zM8.500 4.500h2v2h-2zM4.500 8.500h2v2h-2zM8.500 8.500h2v2h-2z" fill="#1b8bd0"/></svg>
<svg style="left:1578px;top:161px" width="15" height="17" viewBox="0 0 15 17"><rect x=".7" y="5" width="13.600" height="11" fill="#fff" stroke="#1b8bd0" stroke-width="1.300"/><path d="M.7 8.700h13.600M.7 12.300h13.600M9.500 5v11M12 5v11" stroke="#1b8bd0" stroke-width="1.100"/><rect x="3.800" y="4" width="3.400" height="12.500" fill="#f08a1a"/><path d="M5.500 0v3.500M4 1.500h3" stroke="#f08a1a" stroke-width="1.100"/></svg>
<svg style="left:1578px;top:185px" width="15" height="15" viewBox="0 0 15 15" fill="none"><rect x=".7" y=".7" width="13.600" height="13.600" stroke="#1b8bd0" stroke-width="1.400"/><rect x="1.400" y="1.400" width="12.200" height="2.200" fill="#1b8bd0"/><rect x="2.200" y="4.800" width="6.500" height="5" fill="#4aa8e0"/><path d="M10 12h4M10 10.500v3M14 10.500v3" stroke="#1b8bd0" stroke-width="1"/><rect x="9.300" y="9.300" width="5.700" height="5.700" fill="#f7f7f7" stroke="none"/><path d="M10 12.200h4.200M10 10.800v2.800M14.200 10.800v2.800" stroke="#1b8bd0" stroke-width="1.100"/></svg>
<svg style="left:1578px;top:207px" width="15" height="15" viewBox="0 0 15 15"><circle cx="3.500" cy="3.500" r="3" fill="#1b8bd0"/><circle cx="11.500" cy="3.500" r="3" fill="#1b8bd0"/><circle cx="3.500" cy="11.500" r="3" fill="#1b8bd0"/><circle cx="11.500" cy="11.500" r="3" fill="#f08a1a"/><path d="M2 3.500h3M10 3.500h3M11.500 2v3M2.300 10.300l2.400 2.400M4.700 10.300l-2.400 2.400M10 10.800h3M10 12.200h3" stroke="#fff" stroke-width=".9"/></svg>
<svg style="left:1578px;top:284px" width="16" height="15" viewBox="0 0 16 15"><rect x="0" y="1" width="4.500" height="13.500" rx="1" fill="#1b8bd0"/><path d="M6 11.500h7.500l1.500 1.500-1.500 1.500H6z" fill="#1b8bd0"/><path d="M7 8.500V6a3.500 3.500 0 0 1 3.500-3.500H13" fill="none" stroke="#1b8bd0" stroke-width="1.500"/><path d="M11.500 0L15 2.500 11.500 5z" fill="#1b8bd0"/></svg>

<!-- bottom toolbar -->
<div class="abs btbbg" style="left:24px;top:269px;width:1533px;height:32px;background:#f7f7f7"></div>
<svg style="left:59px;top:278px" width="16" height="16" viewBox="0 0 16 16" fill="none" stroke="#1b8bd0" stroke-width="1.500"><path d="M2.600 9.200A5.600 5.600 0 0 1 12 3.800"/><path d="M13.400 6.800A5.600 5.600 0 0 1 4 12.200"/><path d="M12.600.8v3.600H9" stroke-width="1.400"/><path d="M3.400 15.200v-3.600H7" stroke-width="1.400"/><path d="M.5 7.200l2 2.400 2.400-2M15.500 8.800l-2-2.400-2.400 2" stroke-width="1.300"/></svg>
<div class="t" style="left:78px;top:278px;font-size:12px">刷新</div>
<div class="dd" style="left:118px;top:284px"></div>
<div class="grip" style="left:134px;top:278px;height:14px"></div>
<svg style="left:146px;top:278px" width="15" height="15" viewBox="0 0 15 15" fill="none" stroke="#a6a6a6" stroke-width="1.300"><circle cx="7.500" cy="7.500" r="6.600"/><path d="M4.300 7.500l2.400 2.600 4.200-5"/></svg>
<div class="t" style="left:165px;top:278px;font-size:12px;color:#a3a3a3">保存</div>
<div class="dd" style="left:204px;top:284px;border-top-color:#555"></div>
<svg style="left:221px;top:278px" width="13" height="13" viewBox="0 0 13 13" fill="none" stroke="#a6a6a6" stroke-width="1.200"><rect x=".6" y=".6" width="11.800" height="11.800"/><path d="M3.500 3.500l6 6M9.500 3.500l-6 6"/></svg>
<div class="t" style="left:239px;top:278px;font-size:12px;color:#a3a3a3">取消</div>
<div class="vsep" style="left:273px;top:272px;height:27px"></div>
<svg style="left:283px;top:278px" width="16" height="15" viewBox="0 0 16 15" fill="none" stroke="#1b8bd0" stroke-width="1.600"><path d="M0 2h15M0 6.800h11M0 11.500h7"/><path d="M9.500 13.500l5-5.500" stroke-width="1.800"/></svg>
<svg style="left:307px;top:278px" width="16" height="15" viewBox="0 0 16 15" fill="none" stroke="#a6a6a6" stroke-width="1.600"><path d="M0 2h15M0 6.800h8M0 11.500h8M12 5.500v8M8.500 9.500h7"/></svg>
<svg style="left:331px;top:278px" width="15" height="15" viewBox="0 0 15 15" fill="none" stroke="#a6a6a6" stroke-width="1.500"><path d="M0 2h14M0 6.800h3M0 11.500h3"/><rect x="5" y="5.500" width="9" height="7.500" rx="1.500" stroke-width="1.100"/><path d="M9.500 7.300v4M7.500 9.300h4" stroke-width="1"/></svg>
<svg style="left:355px;top:278px" width="16" height="15" viewBox="0 0 16 15" fill="none" stroke="#a6a6a6" stroke-width="1.600"><path d="M0 2h15M0 6.800h6M0 11.500h6M8.500 9h7"/></svg>
<div class="grip" style="left:379px;top:278px;height:14px"></div>
<svg style="left:387px;top:278px" width="13" height="15" viewBox="0 0 13 15" fill="none" stroke="#8c8c8c" stroke-width="2.100"><path d="M1 .5v14M11.500 1L5 7.500l6.500 6.500"/></svg>
<svg style="left:412px;top:278px" width="9" height="15" viewBox="0 0 9 15" fill="none" stroke="#8c8c8c" stroke-width="2.100"><path d="M7.500 1L1.500 7.500l6 6.500"/></svg>
<svg style="left:436px;top:278px" width="9" height="15" viewBox="0 0 9 15" fill="none" stroke="#1b8bd0" stroke-width="2.100"><path d="M1.500 1l6 6.500-6 6.500"/></svg>
<svg style="left:457px;top:278px" width="13" height="15" viewBox="0 0 13 15" fill="none" stroke="#1b8bd0" stroke-width="2.100"><path d="M12 .5v14M1.500 1L8 7.500 1.500 14"/></svg>
<svg style="left:479px;top:278px" width="15" height="15" viewBox="0 0 15 15" fill="none" stroke="#a6a6a6" stroke-width="1.300"><path d="M.7 4V.7H4M11 .7h3.300V4M14.300 11v3.300H11M4 14.300H.7V11"/><path d="M5 4.500h3.500l1.500 1.500v4.500H5z" stroke-width="1.100"/></svg>
<div class="grip" style="left:503px;top:278px;height:14px"></div>
<svg style="left:517px;top:278px" width="14" height="15" viewBox="0 0 14 15" fill="none" stroke="#1b8bd0" stroke-width="1.500"><path d="M7 10.500V1M3.500 4.500L7 1l3.500 3.500M1 9.500v4.500h12V9.500"/></svg>
<div class="t" style="left:536px;top:278px;font-size:12px">导出数据...</div>
<div class="dd" style="left:607px;top:284px"></div>
<div class="grip" style="left:624px;top:278px;height:14px"></div>
<svg style="left:631px;top:278px" width="16" height="16" viewBox="0 0 16 16"><path d="M8 0l1.600 2.200 2.700-.5.500 2.700L15 6l-1.200 2L15 10l-2.200 1.600-.5 2.700-2.700-.5L8 16l-1.600-2.200-2.700.5-.5-2.700L1 10l1.200-2L1 6l2.200-1.600.5-2.700 2.700.5z" fill="#1b8bd0"/><circle cx="8" cy="8" r="2.600" fill="#f7f7f7"/></svg>
<div class="abs" style="left:654px;top:274px;width:54px;height:22px;background:#fff;border:1px solid #7a7a7a"></div>
<div class="t" style="left:659px;top:278px;font-size:12.400px">200</div>
<svg style="left:714px;top:278px" width="15" height="15" viewBox="0 0 15 15" fill="none" stroke="#1b8bd0" stroke-width="1.500"><path d="M3 .8l4.500 5 4.500-5M7.500 5.800V11M1 9.500v4.500h13V9.500"/></svg>
<div class="t" style="left:737px;top:278px;font-size:12.400px">42</div>
<div class="grip" style="left:759px;top:278px;height:14px"></div>
<div class="abs" style="left:787px;top:284px;width:7px;height:1px;background:repeating-linear-gradient(90deg,#8c8c8c 0 1px,transparent 1px 3px)"></div>
<div class="t" style="left:805px;top:278px;font-size:12.200px;letter-spacing:.2px">42 行已获取 - 1.644s (1ms 获取), 2025-10-21 20:26:30</div>
<div class="hl" style="left:24px;top:301px;width:1576px;background:#d0d0d0"></div>


</div>

<div class="abs leftedge" style="left:23px;top:100px;width:1px;height:432px;background:#d2d2d2"></div>
<div class="abs rightedge" style="left:1599px;top:41px;width:1px;height:819px;background:#d6d6d6"></div>
<div id="status">
<div class="vsep" style="left:778px;top:2px;height:20px;background:#a8a8a8"></div>
<div class="t" style="left:786px;top:4px;font-size:12px;letter-spacing:.2px">CST</div>
<div class="vsep" style="left:814px;top:2px;height:20px;background:#a8a8a8"></div>
<div class="t" style="left:822px;top:4px;font-size:12px">zh</div>
<div class="vsep" style="left:841px;top:2px;height:20px;background:#a8a8a8"></div>
<div class="t" style="left:849px;top:4px;font-size:12px">可写</div>
<div class="vsep" style="left:975px;top:2px;height:20px;background:#a8a8a8"></div>
<div class="t" style="left:983px;top:4px;font-size:12px">智能插入</div>
<div class="vsep" style="left:1104px;top:2px;height:20px;background:#a8a8a8"></div>
<div class="t" style="left:1111px;top:4px;font-size:12.200px;letter-spacing:.3px">2056 : 1 : 87615</div>
<div class="vsep" style="left:1231px;top:2px;height:20px;background:#a8a8a8"></div>
<div class="t" style="left:1239px;top:4px;font-size:12.200px;letter-spacing:.3px">Sel: 0 | 0</div>
<div class="grip" style="left:1315px;top:6px;height:14px"></div>

</div>
<div id="taskbar">
<svg style="left:16px;top:12px" width="17" height="16" viewBox="0 0 17 16" fill="#fff"><path d="M0 2.300l6.800-1v6.400H0zM7.700 1.200L16.500 0v7.700H7.700zM0 8.500h6.800v6.400l-6.800-1zM7.700 8.500h8.800V16l-8.800-1.200z"/></svg>
<svg style="left:64px;top:12px" width="16" height="16" viewBox="0 0 16 16" fill="none" stroke="#fff" stroke-width="1.200"><circle cx="10.500" cy="5.800" r="5.100"/><path d="M6.800 9.500L.6 15.700"/></svg>
<svg style="left:111px;top:12px" width="18" height="16" viewBox="0 0 18 16" fill="none" stroke="#fff" stroke-width="1.100"><path d="M1.500 3V.6h10V3M1.500 12v2.400h10V12M15.500 0v3M15.500 8v7"/><rect x="1.500" y="4.500" width="10" height="6"/><rect x="14" y="4" width="3" height="3" fill="#fff" stroke="none"/></svg>
<svg style="left:159px;top:7px" width="25" height="25" viewBox="0 0 25 25"><g transform="translate(-3.200 -3.200) scale(1.240)"><path d="M12.500 5.500c-4.600 0-8 3.200-8 7.700 0 4.400 3.400 7.500 8 7.500 3.200 0 5.800-1.400 7-4.200h-4.400c-.6.800-1.500 1.100-2.600 1.100-2 0-3.400-1.200-3.600-3.200h11c.5-5.200-2.700-8.900-7.400-8.900zm-3.500 6.200c.4-1.800 1.700-2.900 3.500-2.900s3.100 1.100 3.300 2.900z" fill="#3bb4f0"/></g><path d="M1.500 19.500C3.500 12.500 12 4.500 23 1.800" fill="none" stroke="#f2c21a" stroke-width="1.800"/><path d="M1.500 19.500c-1 4 2.300 5 5.800 3M23 1.800c1.800 1 1.200 3.500-.8 6.500" fill="none" stroke="#f2c21a" stroke-width="1.500"/><path d="M3.500 13.200h18" stroke="#3bb4f0" stroke-width="3"/></svg>
<svg style="left:208px;top:10px" width="24" height="20" viewBox="0 0 24 20"><path d="M1 1.500h7.500l1.500 1.800h12.500v15.200H1z" fill="#f3d27a"/><path d="M1 4.500h21.500v14H1z" fill="#fbe7a2"/><path d="M2 2.300h5v.9H2z" fill="#fff"/><path d="M5.500 10h12v8.500h-12z" fill="#35a0e8"/><path d="M8.500 13.500h6v5h-6z" fill="#fbe7a2"/></svg>
<svg style="left:256px;top:7px" width="26" height="26" viewBox="0 0 26 26"><circle cx="13" cy="13" r="11" fill="#fff" stroke="#3db7b0" stroke-width="2.200"/><path d="M8.800 23.300c.4-4.300 2.400-6.800 5-8.600l1.500-3.200 3.200 1 .6 4.500.6 6c-3.500 2-7.600 2-10.900.3z" fill="#2a211d"/><path d="M15.200 8.200c1.400-1.500 3.800-1.600 5-.1-.5 1.500-2.400 2.600-4 2.300z" fill="#2a211d"/><path d="M17 12.800v4l1.400-.4v-4z" fill="#fff"/><path d="M7.500 12c.8-3 3.500-5.200 7-4.800M10.500 8.500l1 2" stroke="#2a211d" fill="none" stroke-width=".8"/><circle cx="13.600" cy="9.600" r=".7" fill="#2a211d"/></svg>
<div class="abs" style="left:294px;top:0;width:48px;height:40px;background:#363636"></div>
<div class="abs" style="left:294px;top:38px;width:48px;height:2px;background:#76b9ed"></div>
<svg style="left:305px;top:7px" width="26" height="26" viewBox="0 0 26 26"><circle cx="13" cy="13" r="11" fill="#fff" stroke="#3db7b0" stroke-width="2.200"/><path d="M8.800 23.300c.4-4.300 2.400-6.800 5-8.600l1.500-3.200 3.200 1 .6 4.500.6 6c-3.500 2-7.600 2-10.900.3z" fill="#2a211d"/><path d="M15.200 8.200c1.400-1.500 3.800-1.600 5-.1-.5 1.500-2.400 2.600-4 2.300z" fill="#2a211d"/><path d="M17 12.800v4l1.400-.4v-4z" fill="#fff"/><path d="M7.500 12c.8-3 3.500-5.200 7-4.800M10.500 8.500l1 2" stroke="#2a211d" fill="none" stroke-width=".8"/><circle cx="13.600" cy="9.600" r=".7" fill="#2a211d"/></svg>
<svg style="left:1347px;top:15px" width="14" height="9" viewBox="0 0 14 9" fill="none" stroke="#fff" stroke-width="1.300"><path d="M1 8l6-6.500L13 8"/></svg>
<svg style="left:1372px;top:11px" width="14" height="17" viewBox="0 0 14 17" fill="none" stroke="#fff" stroke-width="1.100"><rect x="3" y=".6" width="5" height="3.500"/><rect x="1.500" y="4" width="8" height="11.500" rx="1"/><path d="M8.500 13l2 2.500 3-4" stroke-width="1.300"/></svg>
<svg style="left:1393px;top:12px" width="18" height="16" viewBox="0 0 18 16" fill="none" stroke="#fff" stroke-width="1.100"><rect x="4.500" y="1" width="12.500" height="8.500"/><path d="M8 13.500h6M11 9.500v4"/><rect x=".6" y=".6" width="3.500" height="5" fill="#000"/><path d="M2.300 5.600V13.500H6"/></svg>
<svg style="left:1417px;top:12px" width="18" height="16" viewBox="0 0 18 16" fill="none" stroke="#fff" stroke-width="1.100"><path d="M.8 5.500h3L8 2v12L3.800 10.500h-3z"/><path d="M10.500 5.500c1 1.500 1 3.500 0 5M12.800 3.500c2 2.700 2 6.300 0 9M15 1.500c3 4 3 9 0 13"/></svg>
<div class="t" style="left:1444px;top:12px;font-size:12.200px;color:#fff;letter-spacing:.3px">ENG</div>
<div class="t" style="left:1476px;top:3px;width:67px;text-align:center;font-size:12.200px;color:#fff;letter-spacing:.2px">20:26</div>
<div class="t" style="left:1476px;top:22px;width:67px;text-align:center;font-size:12.200px;color:#fff;letter-spacing:.2px">2025/10/21</div>
<svg style="left:1558px;top:12px" width="25" height="26" viewBox="0 0 25 26"><path d="M.6.600h16.800v11.500H7l-3 3v-3H.6z" fill="#fff"/><path d="M3 3.500h12M3 6h12M3 8.500h8" stroke="#000" stroke-width="1"/><circle cx="17" cy="15.800" r="7.600" fill="#333" stroke="#8a8a8a" stroke-width="1.200"/></svg>
<div class="t" style="left:1571px;top:20px;font-size:12.500px;color:#fff;font-weight:bold">1</div>
<div class="abs" style="left:1596px;top:0;width:1px;height:40px;background:#5a5a5a"></div>

</div>

<div id="wmlayer">
<div class="wm" style="left:-292px;top:132px"><div>audit审计01(Audit1)</div><div>audit-172.18.210.237</div></div>
<div class="wm" style="left:8px;top:132px"><div>audit审计01(Audit1)</div><div>audit-172.18.210.237</div></div>
<div class="wm" style="left:308px;top:132px"><div>audit审计01(Audit1)</div><div>audit-172.18.210.237</div></div>
<div class="wm" style="left:608px;top:132px"><div>audit审计01(Audit1)</div><div>audit-172.18.210.237</div></div>
<div class="wm" style="left:908px;top:132px"><div>audit审计01(Audit1)</div><div>audit-172.18.210.237</div></div>
<div class="wm" style="left:1208px;top:132px"><div>audit审计01(Audit1)</div><div>audit-172.18.210.237</div></div>
<div class="wm" style="left:1508px;top:132px"><div>audit审计01(Audit1)</div><div>audit-172.18.210.237</div></div>
<div class="wm" style="left:-292px;top:432px"><div>audit审计01(Audit1)</div><div>audit-172.18.210.237</div></div>
<div class="wm" style="left:8px;top:432px"><div>audit审计01(Audit1)</div><div>audit-172.18.210.237</div></div>
<div class="wm" style="left:308px;top:432px"><div>audit审计01(Audit1)</div><div>audit-172.18.210.237</div></div>
<div class="wm" style="left:608px;top:432px"><div>audit审计01(Audit1)</div><div>audit-172.18.210.237</div></div>
<div class="wm" style="left:908px;top:432px"><div>audit审计01(Audit1)</div><div>audit-172.18.210.237</div></div>
<div class="wm" style="left:1208px;top:432px"><div>audit审计01(Audit1)</div><div>audit-172.18.210.237</div></div>
<div class="wm" style="left:1508px;top:432px"><div>audit审计01(Audit1)</div><div>audit-172.18.210.237</div></div>
<div class="wm" style="left:-292px;top:732px"><div>audit审计01(Audit1)</div><div>audit-172.18.210.237</div></div>
<div class="wm" style="left:8px;top:732px"><div>audit审计01(Audit1)</div><div>audit-172.18.210.237</div></div>
<div class="wm" style="left:308px;top:732px"><div>audit审计01(Audit1)</div><div>audit-172.18.210.237</div></div>
<div class="wm" style="left:608px;top:732px"><div>audit审计01(Audit1)</div><div>audit-172.18.210.237</div></div>
<div class="wm" style="left:908px;top:732px"><div>audit审计01(Audit1)</div><div>audit-172.18.210.237</div></div>
<div class="wm" style="left:1208px;top:732px"><div>audit审计01(Audit1)</div><div>audit-172.18.210.237</div></div>
<div class="wm" style="left:1508px;top:732px"><div>audit审计01(Audit1)</div><div>audit-172.18.210.237</div></div>
</div>
</body></html>
